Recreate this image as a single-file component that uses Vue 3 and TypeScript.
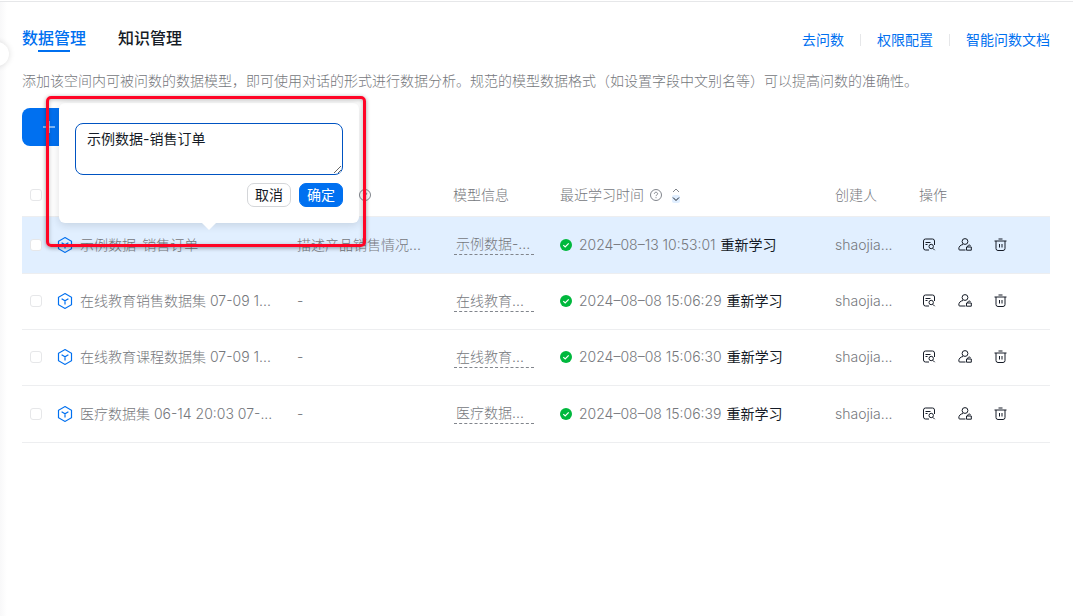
<script setup lang="ts">
import { ref } from 'vue'

interface Row {
  name: string
  desc: string
  info: string
  time: string
  creator: string
  active?: boolean
}

const rows: Row[] = [
  { name: '示例数据-销售订单', desc: '描述产品销售情况...', info: '示例数据-...', time: '2024–08–13 10:53:01', creator: 'shaojia...', active: true },
  { name: '在线教育销售数据集 07-09 1...', desc: '-', info: '在线教育...', time: '2024–08–08 15:06:29', creator: 'shaojia...' },
  { name: '在线教育课程数据集 07-09 1...', desc: '-', info: '在线教育...', time: '2024–08–08 15:06:30', creator: 'shaojia...' },
  { name: '医疗数据集 06-14 20:03 07-...', desc: '-', info: '医疗数据...', time: '2024–08–08 15:06:39', creator: 'shaojia...' },
]
const draft = ref('示例数据-销售订单')
</script>

<template>
  <main class="page">
    <button class="collapse" type="button" aria-label="展开侧栏">
      <svg width="8" height="10" viewBox="0 0 8 10"><path d="M7 1 3 5l4 4" /></svg>
    </button>

    <header class="top">
      <nav class="tabs">
        <button class="tab current" type="button">数据管理</button>
        <button class="tab" type="button">知识管理</button>
      </nav>
      <nav class="links">
        <a href="#">去问数</a>
        <a href="#">权限配置</a>
        <a href="#">智能问数文档</a>
      </nav>
    </header>

    <p class="intro">添加该空间内可被问数的数据模型，即可使用对话的形式进行数据分析。规范的模型数据格式（如设置字段中文别名等）可以提高问数的准确性。</p>

    <button class="add" type="button" aria-label="添加">
      <svg width="12" height="12" viewBox="0 0 12 12"><path d="M6 0v12M0 6h12" /></svg>
    </button>

    <table class="grid">
      <colgroup>
        <col class="c-check" /><col class="c-name" /><col class="c-desc" /><col class="c-info" />
        <col class="c-time" /><col class="c-creator" /><col />
      </colgroup>
      <thead>
        <tr>
          <th><input class="check" type="checkbox" aria-label="全选" /></th>
          <th aria-label="名称"></th>
          <th aria-label="描述">
            <svg class="help in-desc" width="12" height="12" viewBox="0 0 12 12"><circle cx="6" cy="6" r="5.5" /><path d="M4.4 4.8c0-2.1 3.2-2 3.2 0 0 1.1-1.6 1.2-1.6 2.3M6 8.2v1" /></svg>
          </th>
          <th>模型信息</th>
          <th>
            <div class="line">
              最近学习时间
              <svg class="help" width="12" height="12" viewBox="0 0 12 12"><circle cx="6" cy="6" r="5.5" /><path d="M4.4 4.8c0-2.1 3.2-2 3.2 0 0 1.1-1.6 1.2-1.6 2.3M6 8.2v1" /></svg>
              <button class="sort" type="button" aria-label="排序">
                <svg width="8" height="16" viewBox="0 0 8 16"><rect y="8" width="8" height="8" rx="2" /><path class="up" d="M1 5l3-3 3 3" /><path class="down" d="M1 10.5l3 3 3-3" /></svg>
              </button>
            </div>
          </th>
          <th>创建人</th>
          <th>操作</th>
        </tr>
      </thead>
      <tbody>
        <tr v-for="(row, i) in rows" :key="i" :class="{ active: row.active }">
          <td><input class="check" type="checkbox" :aria-label="row.name" /></td>
          <td>
            <div class="line name">
              <svg class="cube" width="16" height="16" viewBox="0 0 16 16"><path d="M8 .6 14.500 4.300v7.400L8 15.400 1.500 11.700V4.300ZM4.600 5.800 8 7.800l3.400-2M8 7.800v3.700" /></svg>
              <span>{{ row.name }}</span>
              <div v-if="row.active" class="popover">
                <textarea v-model="draft" class="box" aria-label="名称"></textarea>
                <div class="actions">
                  <button class="btn" type="button">取消</button>
                  <button class="btn primary" type="button">确定</button>
                </div>
                <div class="frame"></div>
              </div>
            </div>
          </td>
          <td>{{ row.desc }}</td>
          <td><span class="info">{{ row.info }}</span></td>
          <td>
            <div class="line time">
              <svg width="12" height="12" viewBox="0 0 12 12"><circle cx="6" cy="6" r="6" fill="#00b83d" /><path d="M3.300 6.100 5.200 8l3.500-3.600" fill="none" stroke="#fff" stroke-width="1.200" /></svg>
              <span class="stamp">{{ row.time }}</span>
              <button class="again" type="button">重新学习</button>
            </div>
          </td>
          <td>{{ row.creator }}</td>
          <td>
            <div class="ops">
              <button type="button" aria-label="查看">
                <svg width="14" height="14" viewBox="0 0 14 14"><path d="M12.500 7V3a2 2 0 0 0-2-2h-7a2 2 0 0 0-2 2v7a2 2 0 0 0 2 2H7M3.500 4.500h5M3.500 6.500h2M10.800 10.300l1.900 1.900" /><circle cx="9.200" cy="8.500" r="2.200" /></svg>
              </button>
              <button type="button" aria-label="权限">
                <svg width="14" height="14" viewBox="0 0 14 14"><circle cx="7" cy="3.500" r="2.900" /><path d="M5 6.500C2.300 7 .8 8.600.8 11q0 1 1 1H7.500M8.500 9h4.800v3.200H8.500zM9.600 9c0-2.500 2.800-2.500 2.900-.9" /></svg>
              </button>
              <button type="button" aria-label="删除">
                <svg width="14" height="14" viewBox="0 0 14 14"><path d="M.5 3h12M4.500 1h4M2 3v7.500a2 2 0 0 0 2 2h5a2 2 0 0 0 2-2V3M5.500 6v3.500M8 6v3.500" /></svg>
              </button>
            </div>
          </td>
        </tr>
      </tbody>
    </table>
  </main>
</template>

<style>
body {
  background: #fff;
}
</style>

<style scoped>
.page {
  position: relative;
  box-sizing: border-box;
  min-height: calc(100vh - 1px);
  margin-top: 1px;
  padding: 24px 23px 0 22px;
  overflow: hidden;
  border-top: 1px solid #e6e7e9;
  background: linear-gradient(90deg, #f8f8f9, #fff 7px);
  font: 14px/20px Inter, "Noto Sans CJK SC", sans-serif;
  color: #84868c;
}
button {
  padding: 0;
  border: 0;
  background: none;
  font: inherit;
  color: #151b26;
}
svg {
  flex: none;
  display: block;
  fill: none;
}
.collapse {
  position: absolute;
  top: 40px;
  left: -15px;
  display: flex;
  align-items: center;
  justify-content: center;
  width: 24px;
  height: 24px;
  border-radius: 50%;
  background: #fff;
  box-shadow: 0 0 6px #00000024;
}
.collapse svg {
  stroke: #81858c;
}
.top {
  display: flex;
  justify-content: space-between;
}
.tabs {
  display: flex;
  gap: 32px;
}
.tab {
  display: flex;
  flex-direction: column;
  align-items: center;
  font-size: 16px;
  line-height: 24px;
  font-weight: 500;
}
.tab.current {
  color: #0070f0;
}
.tab.current::after {
  content: "";
  width: 32px;
  height: 2px;
  background: #0070f0;
}
.links {
  display: flex;
  align-items: flex-start;
  padding-top: 4px;
}
.links a {
  display: flex;
  align-items: center;
  height: 20px;
  color: #0070f0;
  text-decoration: none;
}
.links a + a::before {
  content: "";
  width: 1px;
  height: 12px;
  margin: 0 16px;
  background: #e6e7e9;
}
.intro {
  margin: 19px 0 17px;
  font-weight: 300;
  color: #75777c;
  white-space: nowrap;
}
.add {
  display: flex;
  align-items: center;
  width: 130px;
  height: 38px;
  padding-left: 21px;
  border-radius: 8px;
  background: #0070f0;
}
.add svg {
  stroke: #fff;
}
.grid {
  width: 100%;
  margin-top: 28px;
  border-collapse: collapse;
  table-layout: fixed;
}
.c-check { width: 35px; }
.c-name { width: 240px; }
.c-desc { width: 156px; }
.c-info { width: 107px; }
.c-time { width: 275px; }
.c-creator { width: 84px; }
th,
td {
  height: 56px;
  padding: 0;
  border-bottom: 1px solid #edeef0;
  box-sizing: border-box;
  font-weight: 300;
  color: #75777c;
  text-align: left;
  white-space: nowrap;
}
th {
  height: 42px;
}
.active td {
  height: 57px;
  background: #e1efff;
}
tr:last-child td {
  height: 57px;
}
.check {
  display: block;
  appearance: none;
  box-sizing: border-box;
  width: 12px;
  height: 12px;
  margin: 0 0 0 8px;
  border: 1px solid #e6e7e9;
  border-radius: 3px;
  background: #fff;
}
.line {
  position: relative;
  display: flex;
  align-items: center;
}
.help {
  margin-left: 6px;
  stroke: #81858c;
}
.help.in-desc {
  margin-left: 62px;
}
.sort {
  margin-left: 10px;
}
.sort rect {
  fill: #e1efff;
}
.sort .up {
  stroke: #81858c;
}
.sort .down {
  stroke: #151b26;
}
.name {
  gap: 7px;
}
.cube {
  stroke: #0070f0;
  stroke-width: 1.2;
}
.info {
  display: inline-block;
  width: 78px;
  margin-left: 1px;
  padding-left: 2px;
  border-bottom: 1px dashed #81858c;
}
.stamp {
  margin: 0 5px 0 7px;
}
.again {
  font-weight: 400;
}
.ops {
  display: flex;
  gap: 22px;
  padding-left: 3px;
}
.ops svg {
  stroke: #151b26;
}
.popover {
  position: absolute;
  bottom: calc(100% + 12px);
  left: 2px;
  z-index: 2;
  box-sizing: border-box;
  width: 300px;
  padding: 20px 16px 16px;
  border-radius: 6px;
  background: #fff;
  box-shadow: 0 2px 8px #151b2624;
}
.popover::after {
  content: "";
  position: absolute;
  top: 100%;
  left: 143px;
  border: 7px solid transparent;
  border-top-color: #fff;
  border-bottom: 0;
}
.box {
  display: block;
  box-sizing: border-box;
  width: 100%;
  height: 52px;
  padding: 5px 11px;
  border: 1px solid #0054c2;
  border-radius: 8px;
  outline: 0;
  background: #fff;
  font: inherit;
  font-weight: 400;
  color: #151b26;
}
.actions {
  display: flex;
  justify-content: flex-end;
  gap: 8px;
  margin-top: 8px;
}
.btn {
  box-sizing: border-box;
  height: 24px;
  padding: 0 7px;
  border: 1px solid #d4d6d9;
  border-radius: 7px;
  font-weight: 400;
}
.btn.primary {
  border-color: #0070f0;
  background: #0070f0;
  color: #fff;
}
.frame {
  position: absolute;
  inset: -7px -7px -24px -13px;
  z-index: 3;
  border: 3px solid #ff0526;
  border-radius: 5px;
  box-shadow: 0 1px 4px #00000066, inset 0 1px 4px #00000040;
  pointer-events: none;
}
</style>
